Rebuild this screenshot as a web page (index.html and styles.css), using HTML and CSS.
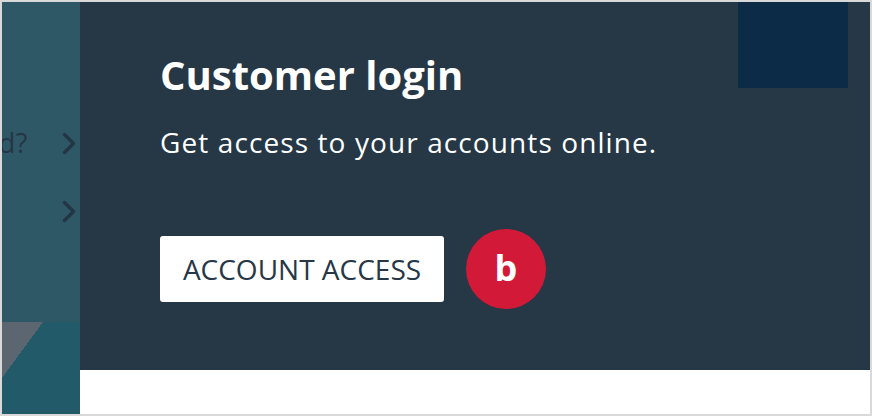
FILE: index.html
```html
<!DOCTYPE html>
<html>
<head>
<meta charset="utf-8">
<link rel="stylesheet" href="styles.css">
</head>
<body>
<div class="frame">
  <aside class="side">
    <div class="side-top">
      <div class="side-row first">
        <span class="side-text">Forgotten your password?</span>
        <svg class="chev" width="14" height="23" viewBox="0 0 14 23"><path d="M2.5 2.5 L11.5 11.5 L2.5 20.5" fill="none" stroke="#243646" stroke-width="3.4" stroke-linecap="round" stroke-linejoin="round"/></svg>
      </div>
      <div class="side-row">
        <span class="side-text"></span>
        <svg class="chev" width="14" height="23" viewBox="0 0 14 23"><path d="M2.5 2.5 L11.5 11.5 L2.5 20.5" fill="none" stroke="#243646" stroke-width="3.4" stroke-linecap="round" stroke-linejoin="round"/></svg>
      </div>
    </div>
    <div class="side-bottom"><div class="tri"></div></div>
  </aside>
  <main class="main">
    <section class="panel">
      <div class="content">
        <h1 class="title">Customer login</h1>
        <p class="lead">Get access to your accounts online.</p>
        <div class="actions">
          <a class="btn" href="#">ACCOUNT ACCESS</a>
          <span class="logo">b</span>
        </div>
      </div>
      <div class="square"></div>
    </section>
    <div class="below"></div>
  </main>
</div>
</body>
</html>
```

FILE: styles.css
```css
* { box-sizing: border-box; }
html, body { margin: 0; padding: 0; }
body { width: 872px; height: 416px; background: #d9d9d9; }

.frame {
  width: 872px;
  height: 416px;
  border: 2px solid #d9d9d9;
  display: flex;
  overflow: hidden;
}

.side {
  width: 78px;
  flex: none;
  display: flex;
  flex-direction: column;
  overflow: hidden;
}
.side-top {
  height: 320px;
  background: #2e5866;
  padding-top: 127px;
  display: flex;
  flex-direction: column;
  gap: 40px;
}
.side-row {
  height: 28px;
  display: flex;
  justify-content: flex-end;
  align-items: center;
  gap: 34px;
  padding-right: 4px;
  white-space: nowrap;
}
.side-text {
  font-family: "Open Sans", "Noto Sans", sans-serif;
  font-weight: 400;
  font-size: 27px;
  letter-spacing: 0.6px;
  color: #243646;
  line-height: 28px;
}
.chev { flex: none; display: block; }

.side-bottom {
  flex: 1;
  background: #235a69;
}
.tri {
  width: 41px;
  height: 56px;
  background: linear-gradient(to bottom right, #5c6670 50%, transparent 50%);
}

.main {
  flex: 1;
  display: flex;
  flex-direction: column;
}
.panel {
  height: 368px;
  background: #263746;
  display: flex;
  align-items: flex-start;
  padding-left: 80px;
  padding-right: 22px;
}
.content {
  padding-top: 49px;
}
.title {
  margin: 0;
  font-family: "Open Sans", "Noto Sans", sans-serif;
  font-weight: 700;
  font-size: 40px;
  line-height: 48px;
  color: #ffffff;
}
.lead {
  margin: 27px 0 0;
  font-family: "Open Sans", "Noto Sans", sans-serif;
  font-weight: 400;
  font-size: 28px;
  letter-spacing: 1.1px;
  line-height: 32px;
  color: #ffffff;
}
.actions {
  margin-top: 71px;
  display: flex;
  align-items: center;
  gap: 22px;
}
.btn {
  display: flex;
  align-items: center;
  justify-content: center;
  width: 284px;
  height: 66px;
  background: #ffffff;
  border-radius: 3px;
  font-family: "Open Sans", "Noto Sans", sans-serif;
  font-size: 28px;
  color: #263746;
  text-decoration: none;
}
.logo {
  width: 80px;
  height: 80px;
  border-radius: 50%;
  background: #d21a38;
  color: #ffffff;
  display: flex;
  align-items: center;
  justify-content: center;
  font-family: "Open Sans", "Noto Sans", sans-serif;
  font-weight: 700;
  font-size: 36px;
  line-height: 1;
  padding-bottom: 3px;
}
.square {
  margin-left: auto;
  width: 110px;
  height: 86px;
  background: #0b2b47;
  flex: none;
}
.below {
  flex: 1;
  background: #ffffff;
}
```
